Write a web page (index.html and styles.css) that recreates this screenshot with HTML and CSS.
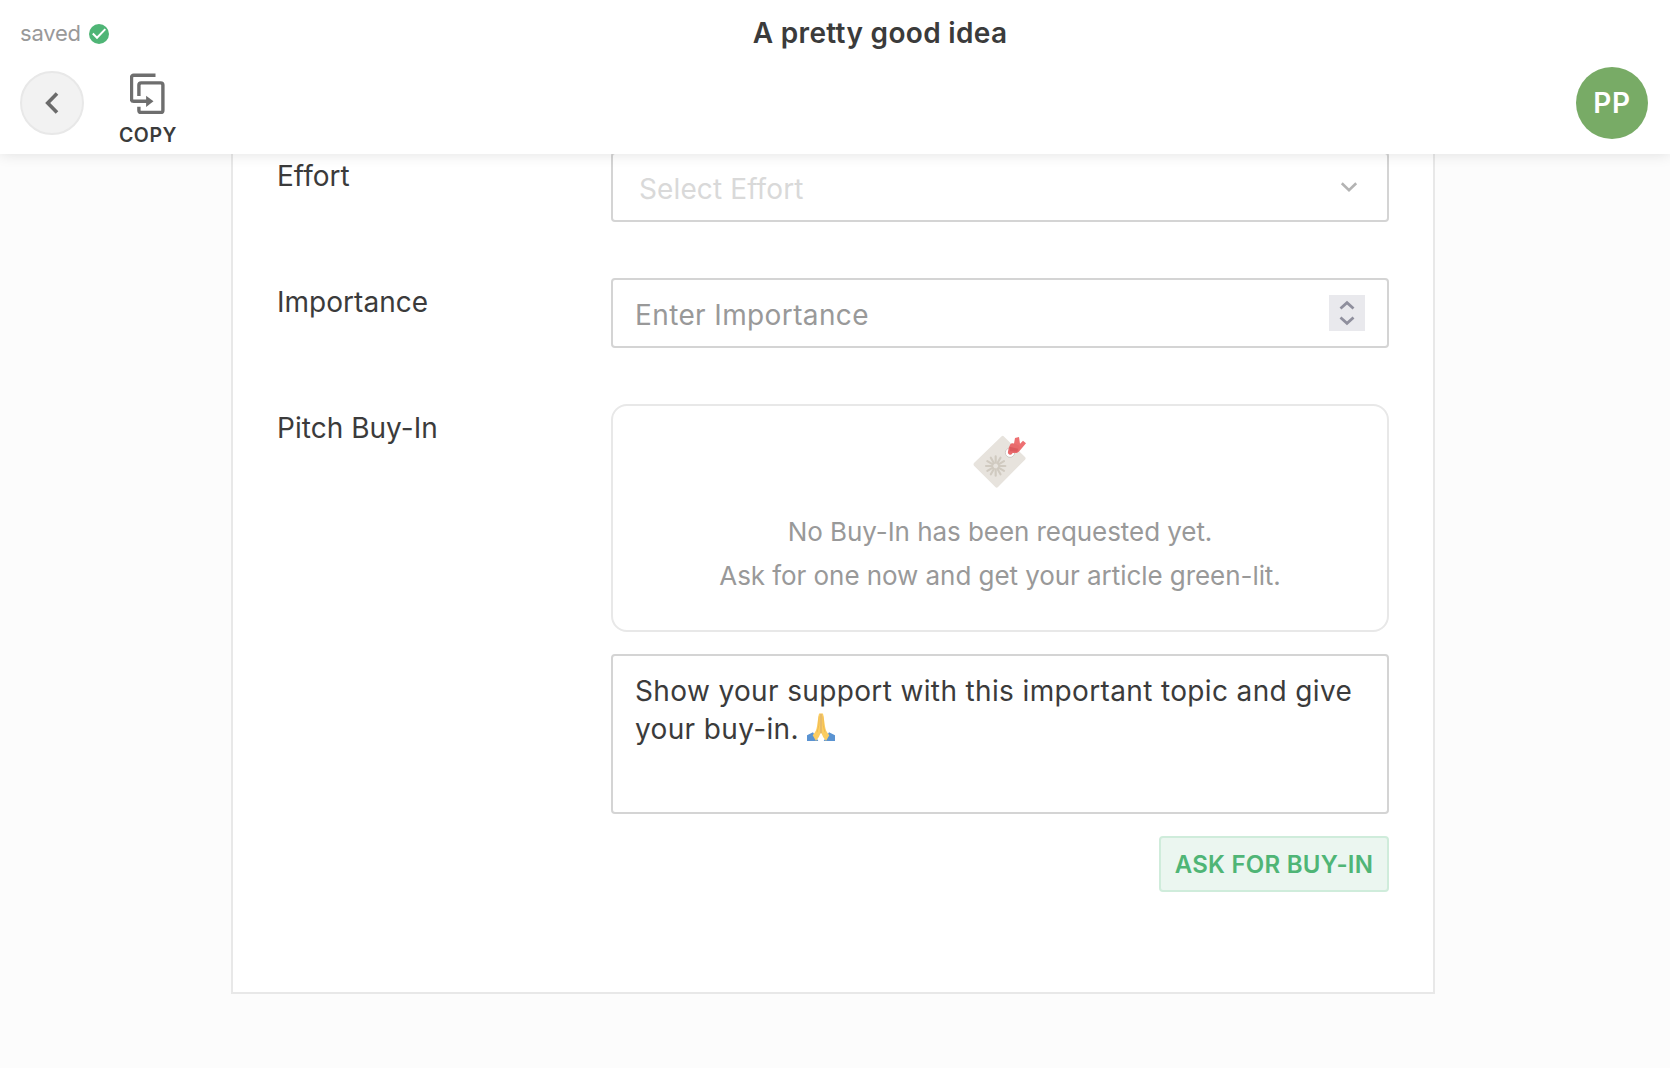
FILE: index.html
```html
<!DOCTYPE html>
<html lang="en">
<head>
<meta charset="utf-8">
<title>A pretty good idea</title>
<link rel="stylesheet" href="styles.css">
</head>
<body>
<header class="topbar">
  <div class="topbar-status">
    <div class="saved"><span>saved</span>
      <svg class="saved-icon" viewBox="0 0 20 20"><circle cx="10" cy="10" r="10" fill="#4fb576"/><path d="M3.800 9.500l4.200 4.200 8.300-8.600" fill="none" stroke="#fff" stroke-width="2"/></svg>
    </div>
    <h1 class="title">A pretty good idea</h1>
  </div>
  <div class="toolbar">
    <button class="back" type="button" aria-label="Back">
      <svg width="14" height="22" viewBox="0 0 14 22"><path d="M12 1.500L2.700 11l9.300 9.500" fill="none" stroke="#6b6b6b" stroke-width="3.600"/></svg>
    </button>
    <button class="copy" type="button">
      <svg width="36" height="42" viewBox="0.5 0 36 42"><g fill="none" stroke="#6e6e6e" stroke-width="3.400"><path d="M26 2.300H4.200Q2 2.300 2 4.500V26.100Q2 28.300 4.200 28.300H18"/><path d="M9.400 23V12Q9.400 9.900 11.600 9.900H31.200Q33.400 9.900 33.400 12V37.200Q33.400 39.400 31.200 39.400H11.600Q9.400 39.400 9.400 37.200V33.800"/></g><path d="M16.600 22.700L24 28.300l-7.400 5.600z" fill="#6e6e6e"/></svg>
      <span>COPY</span>
    </button>
    <div class="avatar">PP</div>
  </div>
</header>
<main class="page">
  <form class="card">
    <div class="row">
      <label class="label">Effort</label>
      <div class="field select"><span>Select Effort</span>
        <svg width="18" height="12" viewBox="0 0 18 12"><path d="M1.800 2.200L9 9.200l7.200-7" fill="none" stroke="#b3b3b3" stroke-width="2.600"/></svg>
      </div>
    </div>
    <div class="row">
      <label class="label">Importance</label>
      <div class="field number"><span>Enter Importance</span>
        <svg class="stepper" viewBox="0 0 36 36"><path d="M11.500 13.500L18 7.700l6.500 5.800M11.500 22.500L18 28.300l6.500-5.800" fill="none" stroke="#8f8f9d" stroke-width="2.800"/></svg>
      </div>
    </div>
    <div class="row">
      <label class="label">Pitch Buy-In</label>
      <div class="buyin">
        <div class="empty">
          <svg class="tag" width="64" height="64" viewBox="3 0 192 192">
            <path d="M104 19Q107 16 110 19L174 81Q178 85 174 89L93 171Q89 175 85 171L21 107Q18 103 21 99z" fill="#e7e3dd"/>
            <g fill="none" stroke="#d0cac0" stroke-width="6.500" stroke-linecap="round">
              <path d="M86 79v19M86 118v19M57 108h19M96 108h19"/>
              <path d="M71.500 83l9.500 16.500M91 116.500l9.500 16.500M61 93.500l16.500 9.500M94.500 113l16.500 9.500M100.500 83L91 99.500M81 116.500L71.500 133M111 93.500L94.500 103M77.500 113L61 122.500"/>
            </g>
            <circle cx="129" cy="68" r="14" fill="#fff" stroke="#bcb8b3" stroke-width="2"/>
            <path d="M144 24l12-3 3 20 9-9 9 8-22 26-16-14z" fill="#ed7072"/>
            <path d="M125 54l5-11q3-4 8-3l15 5q6 2 5 8l-3 11q-2 5-7 5l-11 0q-3 7-9 5-7-2-5-9z" fill="#e86a6c"/>
            <path d="M128 50l25 6-2 9-22-1z" fill="#dc595d"/>
          </svg>
          <p>No Buy-In has been requested yet.</p>
          <p>Ask for one now and get your article green-lit.</p>
        </div>
        <div class="field message">Show your support with this important topic and give your buy-in. <svg class="emoji" role="img" aria-label="Folded hands" viewBox="0 0 84 84">
            <path d="M0 67l18-9 16 26H0zM84 67l-18-9-16 26h34z" fill="#5a93d2"/>
            <path d="M35 5q1-5 6-5v60q-4 12-14 24L17 67q11-11 13-27zM49 5q-1-5-6-5v60q4 12 14 24l10-17Q56 56 54 40z" fill="#fbcd62"/>
            <path d="M42 3v58" stroke="#c98a2d" stroke-width="2.500"/>
            <path d="M36 10q2 30-6 48M48 10q-2 30 6 48" fill="none" stroke="#e7a83f" stroke-width="1.500"/>
          </svg></div>
        <button class="ask" type="button">ASK FOR BUY-IN</button>
      </div>
    </div>
  </form>
</main>
</body>
</html>
```
FILE: styles.css
```css
* { box-sizing: border-box; }

body {
  margin: 0;
  height: 1068px;
  overflow: hidden;
  background: #fcfcfc;
  color: #3b3b3b;
  font-family: Inter, "Liberation Sans", sans-serif;
  font-size: 28px;
}

button { font: inherit; color: inherit; border: 0; background: none; padding: 0; }
svg { display: block; flex: none; }

/* Header */
.topbar {
  position: relative;
  z-index: 1;
  height: 154px;
  background: #fff;
  box-shadow: 0 0 14px rgba(0, 0, 0, .12);
}
.topbar-status {
  display: grid;
  grid-template-columns: 345px 1fr 255px;
  height: 65px;
  padding: 0 20px;
  align-items: center;
}
.saved { display: flex; align-items: center; gap: 8px; color: #999; font-size: 22px; letter-spacing: -.2px; }
.saved-icon { width: 20px; height: 20px; margin-top: 2px; }
.title { margin: 0; padding-top: 1px; font-size: 28px; font-weight: 600; letter-spacing: .32px; text-align: center; }

.toolbar { display: flex; padding: 2px 22px 0 20px; }
.back {
  display: flex;
  align-items: center;
  justify-content: center;
  width: 64px;
  height: 64px;
  margin-top: 4px;
  border: 2px solid #e8e8e8;
  border-radius: 50%;
  background: #f2f2f2;
}
.copy {
  display: flex;
  flex-direction: column;
  align-items: center;
  gap: 8px;
  width: 60px;
  margin: 6px 0 0 34px;
  font-size: 19.5px;
  font-weight: 600;
  line-height: 24px;
  letter-spacing: .6px;
}
.avatar {
  display: flex;
  align-items: center;
  justify-content: center;
  width: 72px;
  height: 72px;
  margin-left: auto;
  border-radius: 50%;
  background: #78ab66;
  color: #fff;
  font-weight: 600;
  letter-spacing: .6px;
}

/* Form */
.card {
  display: flex;
  flex-direction: column;
  gap: 56px;
  width: 1204px;
  height: 840px;
  margin-left: 231px;
  padding: 0 42px 0 44px;
  border: 2px solid #e8e8e8;
  border-top: 0;
  background: #fff;
}
.row { display: grid; grid-template-columns: 334px 778px; }
.row:first-child { margin-top: -2px; }
.label { padding-top: 7px; line-height: 34px; letter-spacing: .03px; }

.field {
  display: flex;
  align-items: center;
  justify-content: space-between;
  height: 70px;
  padding: 0 22px;
  border: 2px solid #d4d4d4;
  border-radius: 4px;
  background: #fff;
}
.field span { padding-top: 3px; }
.select { padding: 0 29px 0 26px; color: #d9d9d9; letter-spacing: .12px; }
.number { color: #999; letter-spacing: .38px; }
.stepper { width: 36px; height: 36px; background: #e9e9ed; }

.buyin { display: flex; flex-direction: column; gap: 22px; }
.empty {
  display: flex;
  flex-direction: column;
  align-items: center;
  height: 228px;
  padding-top: 24px;
  border: 2px solid #e8e8e8;
  border-radius: 16px;
  color: #999;
  font-size: 26px;
  letter-spacing: -.06px;
}
.empty p { margin: 0; line-height: 44px; }
.tag { margin-bottom: 16px; }

.message { display: block; height: 160px; padding: 16px 22px; line-height: 38px; letter-spacing: .36px; }
.emoji { display: inline-block; width: 28px; height: 28px; vertical-align: -2px; }

.ask {
  align-self: flex-end;
  width: 230px;
  height: 56px;
  padding-top: 1px;
  border: 2px solid #cfecdb;
  border-radius: 4px;
  background: #ebf6f0;
  color: #4fb576;
  font-size: 24px;
  font-weight: 600;
  letter-spacing: .25px;
}
```
